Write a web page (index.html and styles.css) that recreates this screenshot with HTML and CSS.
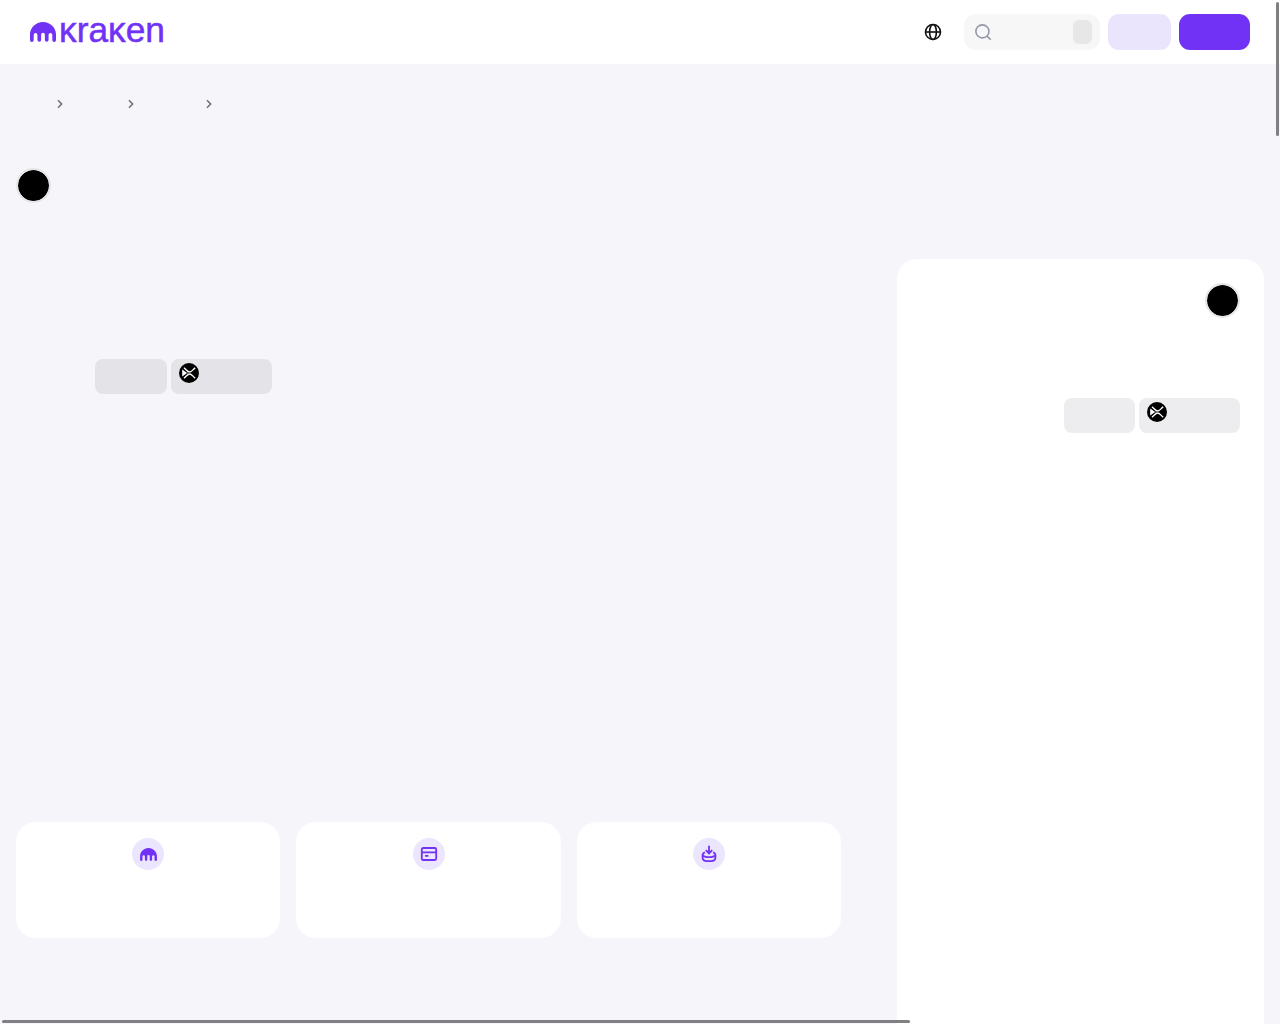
FILE: index.html
```html
<!DOCTYPE html>
<html lang="en">
<head>
<meta charset="utf-8">
<title>Kraken</title>
<link rel="stylesheet" href="styles.css">
</head>
<body>
<svg width="0" height="0" class="defs" aria-hidden="true">
  <symbol id="mark" viewBox="0 0 26 20"><path d="M13 0C5.8 0 0 5.8 0 12.6v5.5a1.86 1.86 0 0 0 3.72 0v-5.4a1.86 1.86 0 0 1 3.71 0v5.4a1.86 1.86 0 0 0 3.71 0v-5.4a1.86 1.86 0 0 1 3.72 0v5.4a1.86 1.86 0 0 0 3.71 0v-5.4a1.86 1.86 0 0 1 3.71 0v5.4a1.86 1.86 0 0 0 3.72 0v-5.5C26 5.8 20.2 0 13 0z" fill="#7132f5"/></symbol>
  <symbol id="coin" viewBox="0 0 20 20"><circle cx="10" cy="10" r="10" fill="#000"/><path d="M5 4.9C7.5 6.7 8.6 9 10.6 9s3.2-2.3 5.6-4.1M5 15.1c2.5-1.8 3.6-4.1 5.6-4.1s3.2 2.3 5.6 4.1" fill="none" stroke="#fff" stroke-width="1.4"/><path d="M3.2 6.6 8.2 10l-5 3.4z" fill="#fff"/><path d="M8 10h4" stroke="#888" stroke-width="1"/></symbol>
  <symbol id="chevron" viewBox="0 0 8 10"><path d="m2 1.3 3.6 3.7L2 8.7" fill="none" stroke="#73717d" stroke-width="1.6"/></symbol>
</svg>
<header class="header">
  <a class="logo" aria-label="Kraken">
    <svg class="logo-mark"><use href="#mark"/></svg>
    <svg class="wordmark" viewBox="0 0 108 30"><text x="0" y="25" textLength="106" lengthAdjust="spacingAndGlyphs">ĸraĸen</text></svg>
  </a>
  <nav class="actions">
    <svg class="globe" viewBox="0 0 18 18"><g fill="none" stroke="#111" stroke-width="1.6"><circle cx="9" cy="9" r="7.5"/><ellipse cx="9" cy="9" rx="3.4" ry="7.5"/><path d="M1.5 9h15"/></g></svg>
    <div class="search">
      <svg class="lens" viewBox="0 0 18 18"><g fill="none" stroke="#9497a9" stroke-width="1.6"><circle cx="8.4" cy="8.4" r="6.5"/><path d="m13.1 13.1 3.6 3.6"/></g></svg>
      <span class="key"></span>
    </div>
    <span class="button login"></span>
    <span class="button signup"></span>
  </nav>
</header>
<div class="crumbs">
  <svg><use href="#chevron"/></svg><svg><use href="#chevron"/></svg><svg><use href="#chevron"/></svg>
</div>
<main class="content">
  <section class="overview">
    <span class="avatar"></span>
    <div class="chips">
      <span class="chip currency"></span>
      <span class="chip asset"><svg><use href="#coin"/></svg></span>
    </div>
    <div class="cards">
      <article class="card"><span class="badge"><svg class="small-mark"><use href="#mark"/></svg></span></article>
      <article class="card"><span class="badge"><svg class="icon" viewBox="0 0 18 18"><path d="M3.3 3h11.4q1.5 0 1.5 1.5v9q0 1.5-1.5 1.5H3.3q-1.5 0-1.5-1.5v-9Q1.8 3 3.3 3zM1.8 7.3h14.4M5 10.8h3.4"/></svg></span></article>
      <article class="card"><span class="badge"><svg class="icon" viewBox="0 0 18 18"><path d="M9 .8v7.4M5.8 5.2 9 8.4l3.2-3.2M4.9 7.4C1.1 8.7 2 12.2 9 12.2s7.9-3.5 4.1-4.8M2.6 9.5v3.4c0 4.4 12.8 4.4 12.8 0V9.5"/></svg></span></article>
    </div>
  </section>
  <aside class="panel">
    <span class="avatar"></span>
    <div class="chips">
      <span class="chip currency"></span>
      <span class="chip asset"><svg><use href="#coin"/></svg></span>
    </div>
  </aside>
</main>
<div class="scroll vertical"></div>
<div class="scroll horizontal"></div>
</body>
</html>
```

FILE: styles.css
```css
* { box-sizing: border-box; }
body { margin: 0; height: 1024px; overflow: hidden; background: #f5f5fa; font-family: "Liberation Sans", Arial, sans-serif; }
svg { display: block; flex: none; }
.defs { position: absolute; }
.header { height: 64px; background: #fff; padding: 0 30px; display: flex; align-items: center; justify-content: space-between; }
.logo { display: flex; align-items: center; gap: 3px; }
.logo-mark { width: 26px; height: 20px; }
.wordmark { width: 108px; height: 30px; overflow: visible; }
.wordmark text { font-size: 35px; fill: #7132f5; stroke: #7132f5; stroke-width: .5px; }
.actions { display: flex; align-items: center; }
.globe { width: 18px; height: 18px; margin-right: 22px; }
.search { width: 136px; height: 36px; border-radius: 12px; background: #f7f7f7; display: flex; align-items: center; justify-content: space-between; padding: 0 8px 0 10px; margin-right: 8px; }
.lens { width: 18px; height: 18px; }
.key { width: 19px; height: 24px; border-radius: 6px; background: #e7e7e8; }
.button { height: 36px; border-radius: 11px; }
.login { width: 63px; background: #eae5fc; margin-right: 8px; }
.signup { width: 71px; background: #7132f5; }
.crumbs { height: 80px; padding-left: 56px; display: flex; align-items: center; }
.crumbs svg { width: 8px; height: 10px; }
.crumbs svg:nth-child(2) { margin-left: 63px; }
.crumbs svg:nth-child(3) { margin-left: 70px; }
.content { display: flex; justify-content: space-between; height: 880px; padding: 0 16px; }
.overview { width: 825px; padding-top: 24px; }
.avatar { display: block; width: 35px; height: 35px; border-radius: 50%; background: #000; border: 2px solid #e6e6e9; background-clip: padding-box; }
.chips { display: flex; gap: 4px; }
.chip { height: 35px; border-radius: 8px; background: #e4e4e8; }
.currency { width: 72px; }
.asset { width: 101px; padding: 4px 8px; }
.asset svg { width: 20px; height: 20px; }
.overview .chips { margin: 156px 0 0 79px; }
.cards { display: grid; grid-template-columns: 264px 265px 264px; gap: 16px; margin-top: 428px; }
.card { height: 116px; border-radius: 20px; background: #fff; padding-top: 16px; }
.badge { width: 32px; height: 32px; margin: 0 auto; border-radius: 50%; background: #ebe5fd; display: flex; align-items: center; justify-content: center; }
.card:nth-child(2) .badge { margin-left: 117px; }
.small-mark { width: 17px; height: 13px; }
.icon { width: 18px; height: 18px; fill: none; stroke: #7132f5; stroke-width: 1.8; }
.panel { width: 367px; height: 800px; margin-top: 115px; border-radius: 20px; background: #fff; padding: 24px; }
.panel .avatar { margin-left: auto; margin-right: 0; }
.panel .chips { margin-top: 80px; justify-content: flex-end; }
.panel .chip { background: #ededef; }
.panel .currency { width: 71px; }
.scroll { position: absolute; background: #808083; border-radius: 2px; }
.vertical { left: 1276px; top: 2px; width: 3px; height: 134px; }
.horizontal { left: 2px; top: 1020px; width: 908px; height: 3px; }
```
